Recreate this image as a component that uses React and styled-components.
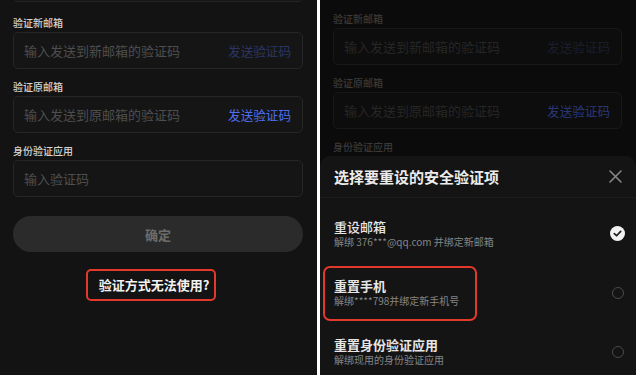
import React from "react";
import styled, { createGlobalStyle } from "styled-components";

const GlobalStyle = createGlobalStyle`
  html, body {
    margin: 0;
    padding: 0;
    background: #ffffff;
  }
  body {
    font-family: "Noto Sans CJK SC", "Noto Sans", sans-serif;
  }
`;

const fields = [
  { label: "验证新邮箱", placeholder: "输入发送到新邮箱的验证码", action: "发送验证码", disabled: true },
  { label: "验证原邮箱", placeholder: "输入发送到原邮箱的验证码", action: "发送验证码" },
  { label: "身份验证应用", placeholder: "输入验证码" },
];

const options = [
  { title: "重设邮箱", desc: "解绑 376***@qq.com 并绑定新邮箱", checked: true },
  { title: "重置手机", desc: "解绑****798并绑定新手机号", highlight: true },
  { title: "重置身份验证应用", desc: "解绑现用的身份验证应用" },
];

// dim = the form behind the bottom sheet; its last input is covered, so only the label shows
function VerifyForm({ dim, shift }) {
  return (
    <Form $shift={shift}>
      <InputBox $dim={dim} />
      {fields.map((f, i) => {
        const covered = dim && i === fields.length - 1;
        return (
          <Field key={i} $first={i === 0}>
            <Label $dim={dim}>{f.label}</Label>
            {!covered && (
              <InputBox $dim={dim}>
                <Placeholder $dim={dim}>{f.placeholder}</Placeholder>
                {f.action && (
                  <SendLink $dim={dim} $disabled={f.disabled}>
                    {f.action}
                  </SendLink>
                )}
              </InputBox>
            )}
          </Field>
        );
      })}
      {!dim && <Confirm>确定</Confirm>}
      {!dim && <Fallback>验证方式无法使用?</Fallback>}
    </Form>
  );
}

function CheckIcon() {
  return (
    <svg width="15" height="15" viewBox="0 0 16 16">
      <circle cx="8" cy="8" r="8" fill="#f2f2f2" />
      <path
        d="M4.6 8.2 L7 10.4 L11.4 5.8"
        fill="none"
        stroke="#1a1a1a"
        strokeWidth="1.8"
        strokeLinecap="round"
        strokeLinejoin="round"
      />
    </svg>
  );
}

function CloseIcon() {
  return (
    <svg width="13" height="13" viewBox="0 0 13 13">
      <path d="M1 1 L12 12 M12 1 L1 12" stroke="#8a8a8a" strokeWidth="1.5" strokeLinecap="round" />
    </svg>
  );
}

export default function App() {
  return (
    <>
      <GlobalStyle />
      <Screen>
        <Panel>
          <VerifyForm shift={-35} />
        </Panel>
        <Panel $dark>
          <VerifyForm dim shift={-39} />
          <Sheet>
            <SheetHeader>
              <SheetTitle>选择要重设的安全验证项</SheetTitle>
              <CloseIcon />
            </SheetHeader>
            <OptionList>
              {options.map((o, i) => (
                <Option key={i}>
                  <OptionText $highlight={o.highlight}>
                    <OptionTitle $bold={i > 0}>{o.title}</OptionTitle>
                    <OptionDesc>{o.desc}</OptionDesc>
                  </OptionText>
                  {o.checked ? <CheckIcon /> : <Radio />}
                </Option>
              ))}
            </OptionList>
          </Sheet>
        </Panel>
      </Screen>
    </>
  );
}

const Screen = styled.div`
  width: 636px;
  height: 375px;
  display: flex;
  gap: 3px;
  overflow: hidden;
  background: #ffffff;
`;

const Panel = styled.div`
  position: relative;
  width: ${(p) => (p.$dark ? "316px" : "317px")};
  height: 375px;
  overflow: hidden;
  background: ${(p) => (p.$dark ? "#0b0b0b" : "#131313")};
  padding: 0 14px 0 13px;
  box-sizing: border-box;
`;

const Form = styled.div`
  display: flex;
  flex-direction: column;
  margin-top: ${(p) => p.$shift}px;
`;

const Field = styled.div`
  display: flex;
  flex-direction: column;
  gap: 2px;
  margin-top: ${(p) => (p.$first ? "14px" : "11px")};
`;

const Label = styled.div`
  font-size: 10px;
  line-height: 14px;
  font-weight: 500;
  color: ${(p) => (p.$dim ? "#3a3a3a" : "#d4d4d4")};
`;

const InputBox = styled.div`
  height: 37px;
  box-sizing: border-box;
  border: 1px solid ${(p) => (p.$dim ? "#181818" : "#262626")};
  background: ${(p) => (p.$dim ? "#0d0d0d" : "#151515")};
  border-radius: 5px;
  display: flex;
  align-items: center;
  justify-content: space-between;
  padding: 0 11px 0 10px;
`;

const Placeholder = styled.span`
  font-size: 13px;
  color: ${(p) => (p.$dim ? "#262626" : "#4e4e4e")};
`;

const SendLink = styled.span`
  font-size: 12.6px;
  color: ${(p) =>
    p.$dim
      ? p.$disabled
        ? "#1a1e2c"
        : "#2a3776"
      : p.$disabled
      ? "#2c3565"
      : "#4d6ff0"};
`;

const Confirm = styled.div`
  margin-top: 19px;
  height: 36px;
  border-radius: 18px;
  background: #2b2b2b;
  color: #6c6c6c;
  font-size: 13px;
  font-weight: 700;
  display: flex;
  align-items: center;
  justify-content: center;
`;

const Fallback = styled.div`
  align-self: center;
  margin: 17px 14px 0 0;
  border: 2px solid #e2392a;
  border-radius: 5px;
  padding: 3px 5px 3px 11px;
  font-size: 13px;
  line-height: 22px;
  font-weight: 700;
  color: #f2f2f2;
`;

const Sheet = styled.div`
  position: absolute;
  top: 156px;
  left: 0;
  right: 0;
  bottom: 0;
  background: #141414;
  border-radius: 10px 10px 0 0;
`;

const SheetHeader = styled.div`
  height: 41px;
  display: flex;
  align-items: center;
  justify-content: space-between;
  padding: 0 14px 0 14px;
  border-bottom: 1px solid #1d1d1d;
`;

const SheetTitle = styled.div`
  font-size: 15px;
  line-height: 20px;
  font-weight: 700;
  color: #ececec;
`;

const OptionList = styled.div`
  padding-top: 6px;
  display: flex;
  flex-direction: column;
`;

const Option = styled.div`
  height: 59px;
  flex-shrink: 0;
  display: flex;
  align-items: center;
  justify-content: space-between;
  padding: 0 11px 0 14px;
`;

const OptionText = styled.div`
  display: flex;
  flex-direction: column;
  border-radius: 5px;
  padding: 9px 16px 11px 9px;
  margin: -9px -16px -11px -9px;
  box-shadow: ${(p) => (p.$highlight ? "0 0 0 2px #e2392a" : "none")};
`;

const OptionTitle = styled.div`
  font-size: 13px;
  line-height: 17px;
  font-weight: ${(p) => (p.$bold ? 700 : 500)};
  color: #e6e6e6;
`;

const OptionDesc = styled.div`
  font-size: 10px;
  line-height: 14px;
  color: #858585;
`;

const Radio = styled.div`
  width: 12px;
  height: 12px;
  box-sizing: border-box;
  border: 1.5px solid #4a4a4a;
  border-radius: 50%;
  margin-right: 1px;
`;
